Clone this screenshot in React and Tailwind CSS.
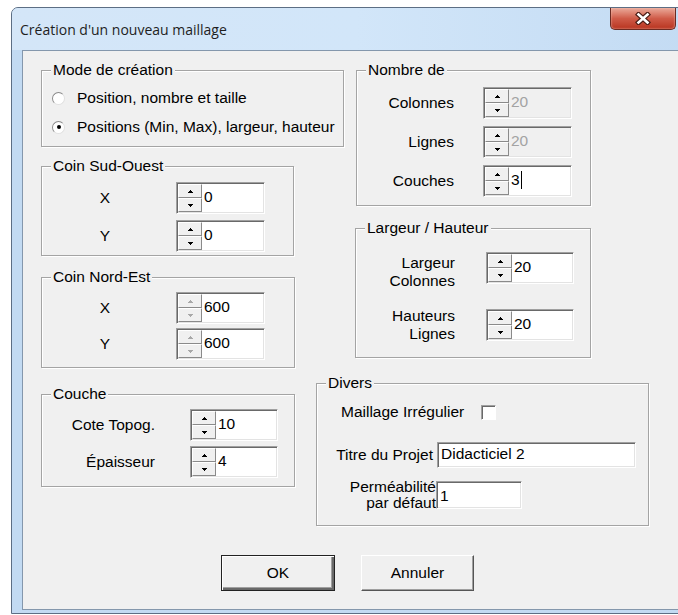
import React from 'react'

const face = "font-['Liberation_Sans',Arial,sans-serif]"

// tiny pixel arrows used on the up/down buttons
function Arrow({ up, color }) {
  return (
    <svg width="5" height="3" viewBox="0 0 5 3" className="block" shapeRendering="crispEdges">
      {up ? (
        <>
          <rect x="2" y="0" width="1" height="1" fill={color} />
          <rect x="1" y="1" width="3" height="1" fill={color} />
          <rect x="0" y="2" width="5" height="1" fill={color} />
        </>
      ) : (
        <>
          <rect x="0" y="0" width="5" height="1" fill={color} />
          <rect x="1" y="1" width="3" height="1" fill={color} />
          <rect x="2" y="2" width="1" height="1" fill={color} />
        </>
      )}
    </svg>
  )
}

function SpinBtn({ up, off }) {
  return (
    <div className="flex flex-1 items-center justify-center border border-t-white border-l-white border-r-[#8a8a8a] border-b-[#8a8a8a] bg-[#f0f0f0]">
      <Arrow up={up} color={off ? '#a8a8a8' : '#000'} />
    </div>
  )
}

function Spin({ value, className, dim, off, caret }) {
  return (
    <div
      className={`flex h-[32px] border border-t-[#a0a0a0] border-l-[#a0a0a0] border-r-white border-b-white shadow-[inset_1px_1px_0_#696969,inset_-1px_-1px_0_#e3e3e3] ${dim ? 'bg-[#f0f0f0] text-[#a3a3a3]' : 'bg-white'} ${className}`}
    >
      <div className="ml-px mt-px mb-px flex w-[24px] flex-col">
        <SpinBtn up off={off} />
        <SpinBtn off={off} />
      </div>
      <div className="flex items-center pb-[3px] pl-[2px]">
        {value}
        {caret && <span className="ml-px h-[18px] w-px bg-black" />}
      </div>
    </div>
  )
}

function Group({ title, className, children }) {
  return (
    <fieldset className={`border border-[#a4a4a4] shadow-[1px_1px_0_#fff,inset_1px_1px_0_#fff] ${className}`}>
      <legend className="ml-[9px] bg-[#f0f0f0] px-[2px] leading-[16px]">{title}</legend>
      {children}
    </fieldset>
  )
}

function Radio({ checked }) {
  return (
    <span className="flex h-[13px] w-[13px] items-center justify-center rounded-full border border-t-[#8a8a8a] border-l-[#8a8a8a] border-r-[#e0e0e0] border-b-[#e0e0e0] bg-white">
      {checked && <span className="h-[4px] w-[4px] rounded-full bg-black" />}
    </span>
  )
}

function Edit({ value, className, top }) {
  return (
    <div
      className={`flex border border-t-[#a0a0a0] border-l-[#a0a0a0] border-r-white border-b-white bg-white pl-[3px] shadow-[inset_1px_1px_0_#696969,inset_-1px_-1px_0_#e3e3e3] ${top ? 'items-start pt-[2px]' : 'items-center pb-[2px]'} ${className}`}
    >
      {value}
    </div>
  )
}

function CoordRow({ label, value, off, className }) {
  return (
    <div className={`flex items-center ${className}`}>
      <span className="w-[134px] pr-[8px] text-center">{label}</span>
      <Spin value={value} off={off} className="w-[89px]" />
    </div>
  )
}

function CountRow({ label, value, dim, caret, className }) {
  return (
    <div className={`flex items-center ${className}`}>
      <span className="w-[97px] text-right">{label}</span>
      <Spin value={value} dim={dim} caret={caret} className="ml-[29px] w-[89px]" />
    </div>
  )
}

export default function App() {
  return (
    <div className={`relative h-[615px] w-[678px] overflow-hidden bg-white ${face} text-[15.5px] text-black`}>
      <div className="ml-[11px] mt-[7px] h-[607px] w-[690px] rounded-tl-[7px] border border-[#5c6e84] bg-[#c2daf2]">
        {/* title bar */}
        <div className="flex h-[42px] items-start rounded-tl-[6px] bg-linear-to-r from-[#d4e6f8] via-[#d2e6f9] to-[#c3dbf3]">
          <span className="ml-[8px] mt-[13px] font-['Segoe_UI','Open_Sans',sans-serif] text-[14px] leading-[18px] text-[#1e1e1e]">
            Création d'un nouveau maillage
          </span>
          <div className="ml-auto mr-[24px] flex h-[22px] w-[66px] items-center justify-center rounded-b-[5px] border border-t-0 border-[#6b2b22] bg-linear-to-b from-[#e9a99a] via-[#cf5b48] to-[#b8331e] shadow-[inset_0_0_2px_#f3c5b8]">
            <svg width="16" height="13" viewBox="0 0 16 13">
              <path d="M3.5 2.5 L12.5 10.5 M12.5 2.5 L3.5 10.5" stroke="#4b1d16" strokeWidth="5" strokeLinecap="square" />
              <path d="M3.5 2.5 L12.5 10.5 M12.5 2.5 L3.5 10.5" stroke="#fff" strokeWidth="2.6" strokeLinecap="square" />
            </svg>
          </div>
        </div>

        {/* client area */}
        <div className="ml-[10px] h-[560px] border border-[#8497ac] bg-[#f0f0f0] pl-[18px] pt-[11px]">
          <div className="flex">
            <div className="w-[303px]">
              <Group title="Mode de création" className="h-[85px] w-[303px]">
                <div className="mt-[10px] flex h-[20px] items-center pl-[10px]">
                  <Radio />
                  <span className="ml-[12px]">Position, nombre et taille</span>
                </div>
                <div className="mt-[9px] flex h-[20px] items-center pl-[10px]">
                  <Radio checked />
                  <span className="ml-[12px]">Positions (Min, Max), largeur, hauteur</span>
                </div>
              </Group>

              <Group title="Coin Sud-Ouest" className="mt-[11px] h-[98px] w-[253px]">
                <CoordRow label="X" value="0" className="mt-[8px]" />
                <CoordRow label="Y" value="0" className="mt-[6px]" />
              </Group>

              <Group title="Coin Nord-Est" className="mt-[13px] h-[99px] w-[254px]">
                <CoordRow label="X" value="600" off className="mt-[7px]" />
                <CoordRow label="Y" value="600" off className="mt-[4px]" />
              </Group>
            </div>

            <div className="ml-[12px]">
              <Group title="Nombre de" className="h-[144px] w-[235px]">
                <CountRow label="Colonnes" value="20" dim className="mt-[9px]" />
                <CountRow label="Lignes" value="20" dim className="mt-[7px]" />
                <CountRow label="Couches" value="3" caret className="mt-[7px]" />
              </Group>

              <Group title="Largeur / Hauteur" className="-ml-px mt-[14px] h-[138px] w-[236px]">
                <div className="mt-[16px] flex items-start">
                  <span className="mt-[2px] w-[99px] text-right leading-[18px]">
                    Largeur
                    <br />
                    Colonnes
                  </span>
                  <Spin value="20" className="ml-[31px] w-[88px]" />
                </div>
                <div className="mt-[17px] flex items-start">
                  <span className="w-[99px] text-right leading-[18px]">
                    Hauteurs
                    <br />
                    Lignes
                  </span>
                  <Spin value="20" className="ml-[31px] mt-[2px] w-[88px]" />
                </div>
              </Group>
            </div>
          </div>

          <div className="flex items-start">
            <Group title="Couche" className="mt-[18px] h-[101px] w-[254px]">
              <div className="mt-[7px] flex items-center">
                <span className="w-[113px] text-right">Cote Topog.</span>
                <Spin value="10" className="ml-[35px] w-[88px]" />
              </div>
              <div className="mt-[5px] flex items-center">
                <span className="w-[113px] text-right">Épaisseur</span>
                <Spin value="4" className="ml-[35px] w-[88px]" />
              </div>
            </Group>

            <Group title="Divers" className="ml-[21px] mt-[7px] h-[151px] w-[333px]">
              <div className="mt-[11px] flex h-[20px] items-center pl-[24px]">
                <span>Maillage Irrégulier</span>
                <span className="ml-[17px] h-[15px] w-[15px] border border-t-[#a0a0a0] border-l-[#a0a0a0] border-r-white border-b-white bg-white shadow-[inset_1px_1px_0_#696969]" />
              </div>
              <div className="mt-[20px] flex items-center">
                <span className="w-[116px] text-right">Titre du Projet</span>
                <Edit value="Didacticiel 2" className="ml-[4px] h-[26px] w-[199px]" />
              </div>
              <div className="mt-[11px] flex items-center">
                <span className="w-[119px] text-right leading-[16px]">
                  Perméabilité
                  <br />
                  par défaut
                </span>
                <Edit value="1" top className="h-[28px] w-[86px]" />
              </div>
            </Group>
          </div>

          <div className="mt-[29px] flex gap-[26px] pl-[180px]">
            <button className="h-[36px] w-[114px] border border-[#222] bg-[#f0f0f0] shadow-[inset_1px_1px_0_#fff,inset_-2px_-2px_0_#696969,inset_-3px_-3px_0_#a0a0a0]">
              OK
            </button>
            <button className="h-[36px] w-[113px] border border-t-white border-l-white border-r-[#555] border-b-[#555] bg-[#f0f0f0] shadow-[inset_-1px_-1px_0_#a0a0a0]">
              Annuler
            </button>
          </div>
        </div>
      </div>
    </div>
  )
}
